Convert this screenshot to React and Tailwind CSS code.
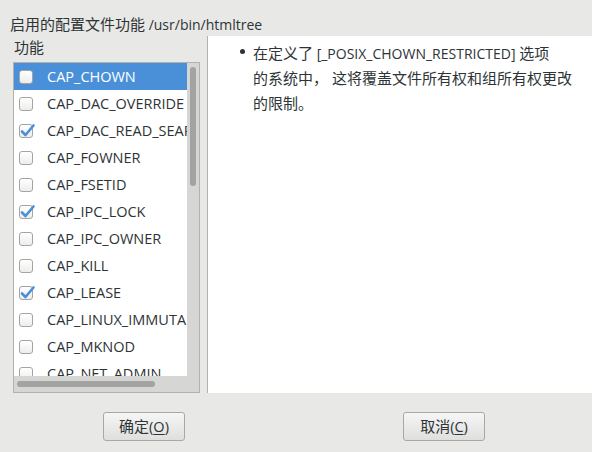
import React from 'react';

const caps = [
  { name: 'CAP_CHOWN', checked: false },
  { name: 'CAP_DAC_OVERRIDE', checked: false },
  { name: 'CAP_DAC_READ_SEARCH', checked: true },
  { name: 'CAP_FOWNER', checked: false },
  { name: 'CAP_FSETID', checked: false },
  { name: 'CAP_IPC_LOCK', checked: true },
  { name: 'CAP_IPC_OWNER', checked: false },
  { name: 'CAP_KILL', checked: false },
  { name: 'CAP_LEASE', checked: true },
  { name: 'CAP_LINUX_IMMUTABLE', checked: false },
  { name: 'CAP_MKNOD', checked: false },
  { name: 'CAP_NET_ADMIN', checked: false },
];

function Cjk({ children }) {
  return <span className="text-[15px]">{children}</span>;
}

function CheckBox({ checked }) {
  return (
    <div className="relative w-[14px] h-[14px] shrink-0 rounded-[3px] border border-[#a4a4a2] bg-gradient-to-b from-white to-[#ededec]">
      {checked && (
        <svg className="absolute -top-[2px] -left-[1px]" width="17" height="16" viewBox="0 0 17 16">
          <path d="M3 8.5 L6.5 12 L14.5 2.5" fill="none" stroke="#4a90d9" strokeWidth="2.6" strokeLinecap="round" strokeLinejoin="round" />
        </svg>
      )}
    </div>
  );
}

function Button({ label, mnemonic }) {
  return (
    <button className="w-[82px] h-[29px] rounded-[3px] border border-[#a8a8a6] bg-gradient-to-b from-[#f6f6f6] to-[#dfdfde] text-[#2e3436] text-[14.5px] flex items-center justify-center">
      <Cjk>{label}</Cjk>(<span className="underline underline-offset-2">{mnemonic}</span>)
    </button>
  );
}

export default function App() {
  return (
    <div
      className="w-[592px] h-[452px] bg-[#e8e8e7] text-[#2e3436] text-[14px] flex flex-col overflow-hidden"
      style={{ fontFamily: '"Open Sans", "Noto Sans CJK SC", sans-serif' }}
    >
      <div className="h-[36px] pl-[10px] pt-[14px] leading-[20px] whitespace-nowrap">
        <Cjk>启用的配置文件功能</Cjk> /usr/bin/htmltree
      </div>

      <div className="flex h-[357px]">
        <div className="ml-[13px] w-[187px] flex flex-col">
          <div className="h-[26px] pl-[1px] pt-[1px] leading-[20px]">
            <Cjk>功能</Cjk>
          </div>
          <div className="flex-1 border border-[#b2b2b0] bg-white flex overflow-hidden">
            <div className="w-[173px] flex flex-col overflow-hidden">
              <div className="h-[313px] overflow-hidden text-[14.5px]">
                {caps.map((c, i) => (
                  <div
                    key={c.name}
                    className={`h-[27px] flex items-center pl-[5px] gap-[14px] whitespace-nowrap ${
                      i === 0 ? 'bg-[#4a90d9] text-white' : ''
                    }`}
                  >
                    <CheckBox checked={c.checked} />
                    <span className="pt-[1px]">{c.name}</span>
                  </div>
                ))}
              </div>
              <div className="flex-1 bg-[#d6d6d5] flex items-center pl-[3px]">
                <div className="w-[138px] h-[6px] rounded-full bg-[#a3a3a2]" />
              </div>
            </div>
            <div className="flex-1 bg-[#d6d6d5] pt-[4px] pl-[3px]">
              <div className="w-[6px] h-[119px] rounded-full bg-[#a3a3a2]" />
            </div>
          </div>
        </div>

        <div className="ml-[7px] flex-1 bg-white border-l border-[#b2b2b0] pt-[5px] pl-[32px] leading-[24px]">
          <div className="flex gap-[8px]">
            <div className="w-[5px] h-[5px] mt-[8px] shrink-0 rounded-full bg-[#2e3436]" />
            <div className="whitespace-nowrap">
              <Cjk>在定义了</Cjk> [_POSIX_CHOWN_RESTRICTED] <Cjk>选项</Cjk>
              <br />
              <Cjk>的系统中， 这将覆盖文件所有权和组所有权更改</Cjk>
              <br />
              <Cjk>的限制。</Cjk>
            </div>
          </div>
        </div>
      </div>

      <div className="flex pt-[19px]">
        <div className="ml-[103px]">
          <Button label="确定" mnemonic="O" />
        </div>
        <div className="ml-[218px]">
          <Button label="取消" mnemonic="C" />
        </div>
      </div>
    </div>
  );
}
